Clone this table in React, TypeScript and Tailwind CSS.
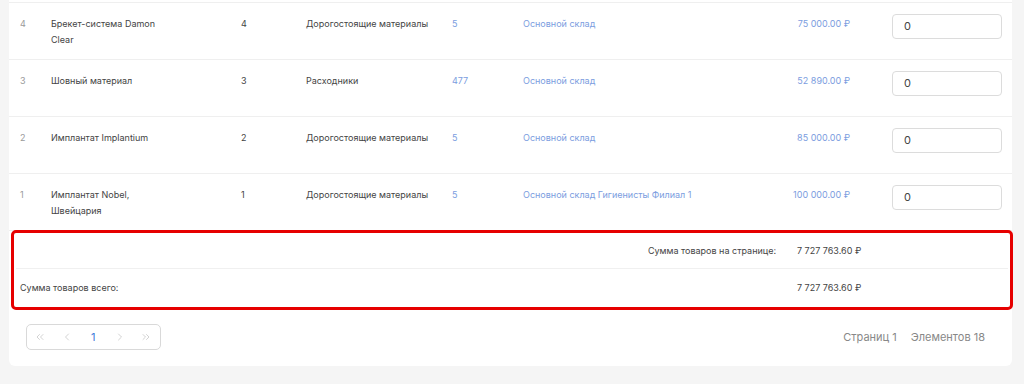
import { ChevronLeft, ChevronRight, ChevronsLeft, ChevronsRight } from 'lucide-react'

type Item = {
  id: number
  name: string[]
  qty: number
  category: string
  stock: number
  warehouse: string
  price: string
}

const items: Item[] = [
  { id: 4, name: ['Брекет-система Damon', 'Clear'], qty: 4, category: 'Дорогостоящие материалы', stock: 5, warehouse: 'Основной склад', price: '75 000.00 ₽' },
  { id: 3, name: ['Шовный материал'], qty: 3, category: 'Расходники', stock: 477, warehouse: 'Основной склад', price: '52 890.00 ₽' },
  { id: 2, name: ['Имплантат Implantium'], qty: 2, category: 'Дорогостоящие материалы', stock: 5, warehouse: 'Основной склад', price: '85 000.00 ₽' },
  { id: 1, name: ['Имплантат Nobel,', 'Швейцария'], qty: 1, category: 'Дорогостоящие материалы', stock: 5, warehouse: 'Основной склад Гигиенисты Филиал 1', price: '100 000.00 ₽' },
]

function Row({ item }: { item: Item }) {
  return (
    <div className="flex h-[57px] items-start border-b border-[#efefef] pl-[11px] pr-[10px] pt-[13px] text-[9px] leading-[15.5px]">
      <div className="w-[31px] text-[#9a9a9a]">{item.id}</div>
      <div className="w-[190px] text-[#444]">
        {item.name.map((line) => (
          <div key={line}>{line}</div>
        ))}
      </div>
      <div className="w-[65px] text-[#444]">{item.qty}</div>
      <div className="w-[146px] whitespace-nowrap text-[#444]">{item.category}</div>
      <div className="w-[71px] text-[#7b9de0]">{item.stock}</div>
      <div className="flex-1 text-[#7b9de0]">{item.warehouse}</div>
      <div className="w-[120px] text-right text-[#7b9de0]">{item.price}</div>
      <div className="ml-[42px] -mt-[2px] w-[110px]">
        <div className="flex h-[25px] items-center rounded border border-[#dcdcdc] bg-white pl-[11px] text-[11px] text-[#444]">
          0
        </div>
      </div>
    </div>
  )
}

export default function App() {
  return (
    <div className="h-[384px] w-[1024px] overflow-hidden bg-[#f5f5f5] font-['Inter',sans-serif]">
      <div className="ml-[9px] w-[1003px] rounded-b-md bg-white">
        <div className="h-[3px] border-b border-[#efefef]" />
        {items.map((item) => (
          <Row key={item.id} item={item} />
        ))}

        {/* totals */}
        <div className="-mt-px ml-[2px] mr-[-1px] rounded-[5px] border-[3px] border-[#e60000] text-[9px] text-[#444]">
          <div className="mx-[2px] flex h-[36px] items-center border-b border-[#f0f0f0]">
            <div className="flex-1 text-right">Сумма товаров на странице:</div>
            <div className="ml-[21px] w-[211px]">7 727 763.60 ₽</div>
          </div>
          <div className="flex h-[38px] items-center pl-[6px]">
            <div className="flex-1">Сумма товаров всего:</div>
            <div className="w-[213px]">7 727 763.60 ₽</div>
          </div>
        </div>

        {/* pagination */}
        <div className="flex items-center justify-between pb-4 pl-[17px] pr-[27px] pt-[14px]">
          <div className="flex h-[26px] items-center rounded-[5px] border border-[#d9d9d9] text-[#c4c4c4]">
            <div className="flex w-[26.5px] justify-center">
              <ChevronsLeft size={12} strokeWidth={1.5} />
            </div>
            <div className="flex w-[26.5px] justify-center">
              <ChevronLeft size={12} strokeWidth={1.5} />
            </div>
            <div className="flex w-[26.5px] justify-center text-[11px] text-[#3f7bd9]">1</div>
            <div className="flex w-[26.5px] justify-center">
              <ChevronRight size={12} strokeWidth={1.5} />
            </div>
            <div className="flex w-[26.5px] justify-center">
              <ChevronsRight size={12} strokeWidth={1.5} />
            </div>
          </div>
          <div className="flex gap-[14px] text-[11px] text-[#888]">
            <span>Страниц 1</span>
            <span>Элементов 18</span>
          </div>
        </div>
      </div>
    </div>
  )
}
